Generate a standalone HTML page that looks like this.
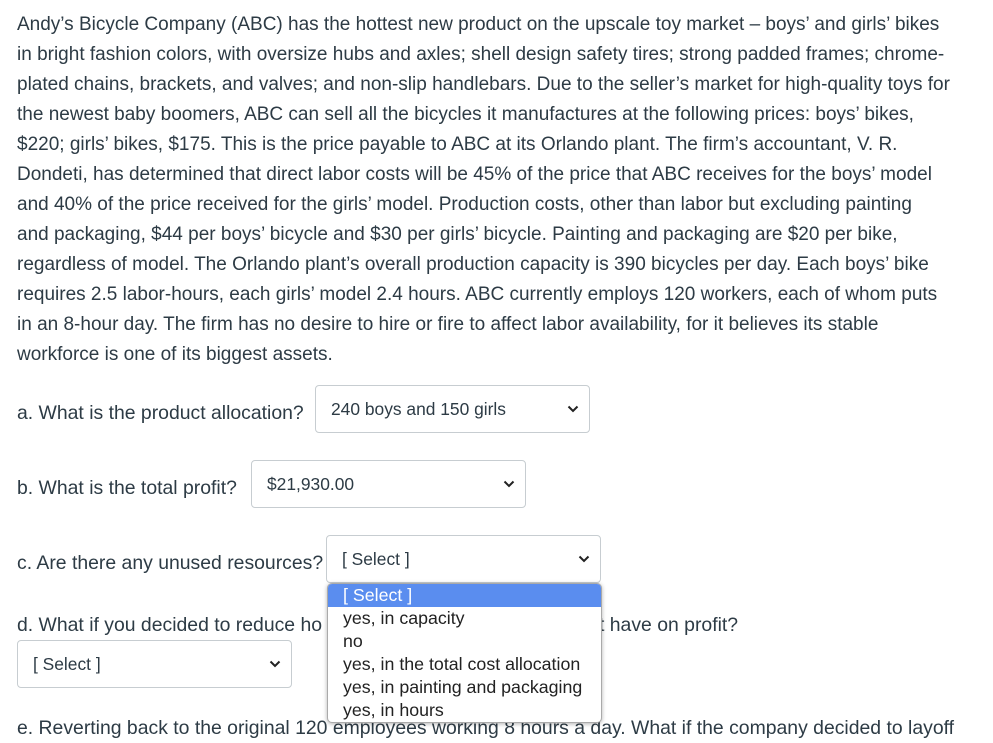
<!DOCTYPE html>
<html><head><meta charset="utf-8"><style>
body{margin:0;width:993px;height:736px;overflow:hidden;background:#fff;font-family:"Liberation Sans",sans-serif;color:#2d3b45;position:relative}
.l{position:absolute;left:17px;white-space:nowrap;font-size:19px;line-height:30px}
.q{font-size:19.4px}
.sel{position:absolute;border:1px solid #c7cdd1;border-radius:4px;background:#fff;box-sizing:border-box;font-size:17.4px;color:#2d3b45}
.sel span{position:absolute;left:15px;top:13px}
.sel svg{position:absolute;right:10px;top:19px}
.dd{position:absolute;left:327px;top:583px;width:273px;height:138px;background:#fff;border:1px solid #aaa;border-radius:5px;box-shadow:0 1px 4px rgba(0,0,0,.3);overflow:hidden;font-size:17.8px;color:#222}
.dd div{height:23px;line-height:23px;padding-left:15px;white-space:nowrap}
.dd .h{background:#5a8def;color:#fff}
</style></head><body>
<div class="l" style="top:10px">Andy’s Bicycle Company (ABC) has the hottest new product on the upscale toy market – boys’ and girls’ bikes</div>
<div class="l" style="top:40px">in bright fashion colors, with oversize hubs and axles; shell design safety tires; strong padded frames; chrome-</div>
<div class="l" style="top:70px">plated chains, brackets, and valves; and non-slip handlebars. Due to the seller’s market for high-quality toys for</div>
<div class="l" style="top:100px">the newest baby boomers, ABC can sell all the bicycles it manufactures at the following prices: boys’ bikes,</div>
<div class="l" style="top:130px">$220; girls’ bikes, $175. This is the price payable to ABC at its Orlando plant. The firm’s accountant, V. R.</div>
<div class="l" style="top:160px">Dondeti, has determined that direct labor costs will be 45% of the price that ABC receives for the boys’ model</div>
<div class="l" style="top:190px">and 40% of the price received for the girls’ model. Production costs, other than labor but excluding painting</div>
<div class="l" style="top:220px">and packaging, $44 per boys’ bicycle and $30 per girls’ bicycle. Painting and packaging are $20 per bike,</div>
<div class="l" style="top:250px">regardless of model. The Orlando plant’s overall production capacity is 390 bicycles per day. Each boys’ bike</div>
<div class="l" style="top:280px">requires 2.5 labor-hours, each girls’ model 2.4 hours. ABC currently employs 120 workers, each of whom puts</div>
<div class="l" style="top:310px">in an 8-hour day. The firm has no desire to hire or fire to affect labor availability, for it believes its stable</div>
<div class="l" style="top:340px">workforce is one of its biggest assets.</div>

<div class="l q" style="top:398px">a. What is the product allocation?</div>
<div class="sel" style="left:315px;top:385px;width:275px;height:48px"><span>240 boys and 150 girls</span><svg width="12" height="8" viewBox="0 0 12 8"><path d="M1.5 1.5L6 6l4.5-4.5" fill="none" stroke="#222" stroke-width="2"/></svg></div>

<div class="l q" style="top:473px">b. What is the total profit?</div>
<div class="sel" style="left:251px;top:460px;width:275px;height:48px"><span>$21,930.00</span><svg width="12" height="8" viewBox="0 0 12 8"><path d="M1.5 1.5L6 6l4.5-4.5" fill="none" stroke="#222" stroke-width="2"/></svg></div>

<div class="l q" style="top:548px">c. Are there any unused resources?</div>
<div class="sel" style="left:326px;top:535px;width:275px;height:48px"><span>[ Select ]</span><svg width="12" height="8" viewBox="0 0 12 8"><path d="M1.5 1.5L6 6l4.5-4.5" fill="none" stroke="#222" stroke-width="2"/></svg></div>

<div class="l q" style="top:610px">d. What if you decided to reduce ho</div>
<div class="l q" style="top:610px;left:599px">t have on profit?</div>
<div class="sel" style="left:17px;top:640px;width:275px;height:48px"><span>[ Select ]</span><svg width="12" height="8" viewBox="0 0 12 8"><path d="M1.5 1.5L6 6l4.5-4.5" fill="none" stroke="#222" stroke-width="2"/></svg></div>

<div class="l q" style="top:713px">e. Reverting back to the original 120 employees working 8 hours a day. What if the company decided to layoff</div>

<div class="dd">
<div class="h">[ Select ]</div>
<div>yes, in capacity</div>
<div>no</div>
<div>yes, in the total cost allocation</div>
<div>yes, in painting and packaging</div>
<div>yes, in hours</div>
</div>
</body></html>
